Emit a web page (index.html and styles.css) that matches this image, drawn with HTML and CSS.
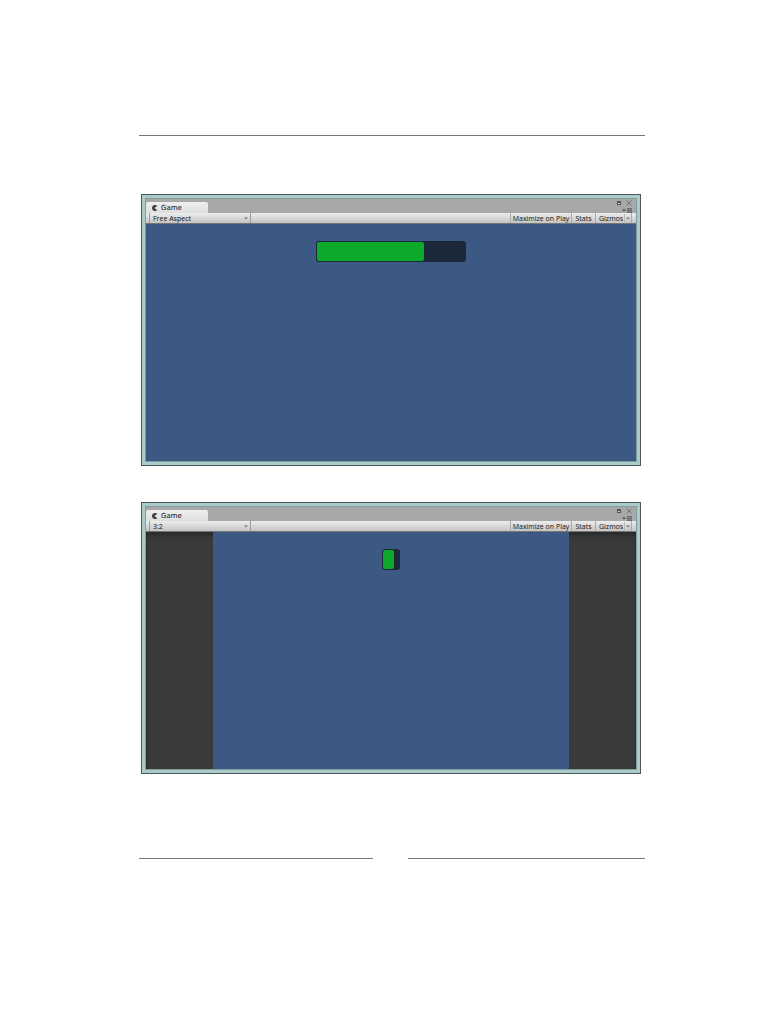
FILE: index.html
```html
<!DOCTYPE html>
<html lang="en">
<head>
<meta charset="utf-8">
<title>Game view</title>
<link rel="stylesheet" href="styles.css">
</head>
<body>
<main class="page">
  <hr class="rule">
  <section class="window" aria-label="Game view, free aspect">
    <div class="inner">
      <header class="tabs">
        <button class="tab" type="button"><svg class="pac" viewBox="0 0 6 6"><path d="M5.3 1A3 3 0 1 0 5.3 5L3 3.6V2.4Z"/></svg>Game</button>
        <div class="controls">
          <div class="pair">
            <button class="icon" type="button" aria-label="Maximize"><svg viewBox="0 0 6 6"><path d="M1 1h4v4H1z" fill="#555"/><path d="M2 3h2v1H2z" fill="#ccc"/></svg></button>
            <button class="icon" type="button" aria-label="Close"><svg viewBox="0 0 6 6"><path d="M.5.5l5 5M5.5.5l-5 5" fill="none" stroke="#666" stroke-width=".8"/></svg></button>
          </div>
          <button class="menu" type="button" aria-label="Tab menu"><svg viewBox="0 0 10 5"><path d="M0 1.5h4L2 3.5z"/><path d="M5 0h5v5H5z" opacity=".35"/><path d="M5 0h5v1H5zM5 2h5v1H5zM5 4h5v1H5z" opacity=".4"/></svg></button>
        </div>
      </header>
      <div class="toolbar">
        <div class="aspect"><select aria-label="Aspect"><option>Free Aspect</option><option>3:2</option></select><svg class="arrow" viewBox="0 0 4 3"><path d="M0 .5h4L2 2.500z"/></svg></div>
        <button class="tool wide" type="button">Maximize on Play</button>
        <button class="tool stats" type="button">Stats</button>
        <button class="tool gizmos" type="button">Gizmos<span class="drop"><svg class="arrow" viewBox="0 0 4 3"><path d="M0 .5h4L2 2.500z"/></svg></span></button>
      </div>
      <div class="view"><div class="scene"><div class="bar"><div class="fill"></div></div></div></div>
    </div>
  </section>
  <section class="window" aria-label="Game view, 3:2">
    <div class="inner">
      <header class="tabs">
        <button class="tab" type="button"><svg class="pac" viewBox="0 0 6 6"><path d="M5.3 1A3 3 0 1 0 5.3 5L3 3.6V2.4Z"/></svg>Game</button>
        <div class="controls">
          <div class="pair">
            <button class="icon" type="button" aria-label="Maximize"><svg viewBox="0 0 6 6"><path d="M1 1h4v4H1z" fill="#555"/><path d="M2 3h2v1H2z" fill="#ccc"/></svg></button>
            <button class="icon" type="button" aria-label="Close"><svg viewBox="0 0 6 6"><path d="M.5.5l5 5M5.5.5l-5 5" fill="none" stroke="#666" stroke-width=".8"/></svg></button>
          </div>
          <button class="menu" type="button" aria-label="Tab menu"><svg viewBox="0 0 10 5"><path d="M0 1.5h4L2 3.5z"/><path d="M5 0h5v5H5z" opacity=".35"/><path d="M5 0h5v1H5zM5 2h5v1H5zM5 4h5v1H5z" opacity=".4"/></svg></button>
        </div>
      </header>
      <div class="toolbar">
        <div class="aspect"><select aria-label="Aspect"><option>Free Aspect</option><option selected>3:2</option></select><svg class="arrow" viewBox="0 0 4 3"><path d="M0 .5h4L2 2.500z"/></svg></div>
        <button class="tool wide" type="button">Maximize on Play</button>
        <button class="tool stats" type="button">Stats</button>
        <button class="tool gizmos" type="button">Gizmos<span class="drop"><svg class="arrow" viewBox="0 0 4 3"><path d="M0 .5h4L2 2.500z"/></svg></span></button>
      </div>
      <div class="view boxed"><div class="scene"><div class="bar small"><div class="fill"></div></div></div></div>
    </div>
  </section>
  <footer class="footer"><hr class="rule"><hr class="rule"></footer>
</main>
</body>
</html>
```
FILE: styles.css
```css
* { box-sizing: border-box; }
body { margin: 0; background: #fff; color: #111; font-family: "Open Sans", "Noto Sans", sans-serif; }
button, select { margin: 0; padding: 0; border: 0; border-radius: 0; background: none; color: inherit; font: inherit; }
svg { display: block; fill: #444; flex: none; }
.page { padding: 135px 137px 153px 139px; }
.rule { height: 1px; margin: 0; border: 0; background: #777; }
.window { margin: 58px 4px 0 2px; padding: 4px; border: 1px solid #4c5657; background: #a9cbca; }
.window + .window { margin-top: 36px; }
.inner { background: #a8a8a8; outline: 1px solid #859b9c; }
.tabs { display: flex; justify-content: space-between; height: 14px; }
.tab { align-self: flex-end; display: flex; align-items: center; gap: 3px; width: 62px; height: 11px; padding: 2px 0 0 6px; border-radius: 2px 2px 0 0; background: linear-gradient(#eee, #dedede); font: 7px/9px "DejaVu Sans", sans-serif; }
.pac { width: 6px; height: 6px; margin-bottom: 2px; }
.controls { display: flex; flex-direction: column; align-items: flex-end; gap: 2px; padding: 1px 4px 0 0; }
.pair { display: flex; gap: 4px; }
.icon, .icon svg { width: 6px; height: 6px; }
.menu, .menu svg { width: 10px; height: 5px; }
.toolbar { display: flex; height: 11px; padding: 0 4px 0 3px; border-bottom: 1px solid #777; background: linear-gradient(#ededed, #c4c4c4); font-size: 7px; font-weight: 500; line-height: 10px; }
.aspect { display: flex; align-items: center; width: 102px; margin-right: auto; padding-right: 2px; border: solid #999; border-width: 0 1px; }
.aspect select { flex: 1; appearance: none; height: 10px; padding: 1px 0 0 3px; line-height: 9px; }
.arrow { width: 4px; height: 3px; fill: #777; }
.tool { border-left: 1px solid #aaa; padding-top: 1px; line-height: 9px; text-align: center; height: 10px; }
.wide { width: 61px; }
.stats { width: 24px; }
.gizmos { display: flex; align-items: center; justify-content: space-between; width: 37px; padding: 1px 1px 0 3px; border-right: 1px solid #aaa; }
.drop { padding: 3px 0 3px 1px; border-left: 1px solid #bbb; }
.view { height: 237px; background: #3c5983; }
.scene { display: flex; justify-content: center; align-items: flex-start; height: 100%; padding-top: 17px; background: #3c5983; }
.bar { width: 150px; height: 21px; padding: 1px; border-radius: 3px; background: #1b293b; }
.fill { width: 72%; height: 100%; border-radius: 2px; background: #0da92a; }
.boxed { padding: 0 67px; background: #3a3a3a; box-shadow: inset 0 3px 4px #282828; }
.small { width: 18px; }
.small .fill { width: 70%; }
.footer { display: grid; grid-template-columns: 234fr 237fr; column-gap: 35px; margin-top: 84px; }
```
